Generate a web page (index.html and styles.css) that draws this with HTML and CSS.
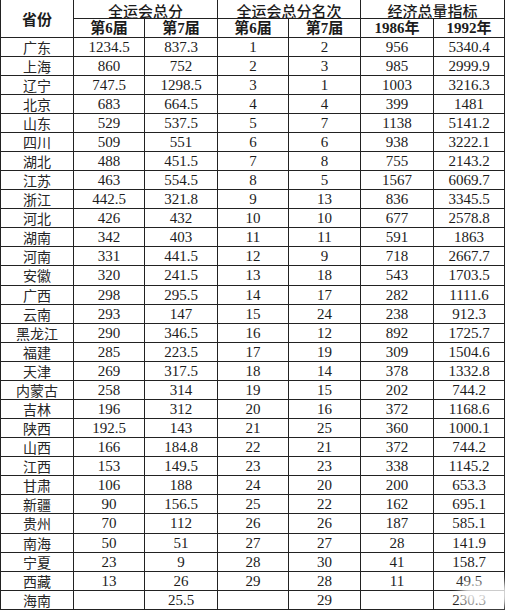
FILE: index.html
```html
<!DOCTYPE html>
<html lang="zh">
<head>
<meta charset="utf-8">
<link rel="stylesheet" href="styles.css">
</head>
<body>
<div class="wrap">
<table class="tbl">
  <colgroup>
    <col class="c1"><col class="c2"><col class="c3"><col class="c4"><col class="c5"><col class="c6"><col class="c7">
  </colgroup>
  <thead>
    <tr class="h1">
      <th rowspan="2" class="prov-h">省份</th>
      <th colspan="2">全运会总分</th>
      <th colspan="2">全运会总分名次</th>
      <th colspan="2">经济总量指标</th>
    </tr>
    <tr class="h2">
      <th>第6届</th><th>第7届</th><th>第6届</th><th>第7届</th><th>1986年</th><th>1992年</th>
    </tr>
  </thead>
  <tbody>
    <tr><td class="p">广东</td><td>1234.5</td><td>837.3</td><td>1</td><td>2</td><td>956</td><td>5340.4</td></tr>
    <tr><td class="p">上海</td><td>860</td><td>752</td><td>2</td><td>3</td><td>985</td><td>2999.9</td></tr>
    <tr><td class="p">辽宁</td><td>747.5</td><td>1298.5</td><td>3</td><td>1</td><td>1003</td><td>3216.3</td></tr>
    <tr><td class="p">北京</td><td>683</td><td>664.5</td><td>4</td><td>4</td><td>399</td><td>1481</td></tr>
    <tr><td class="p">山东</td><td>529</td><td>537.5</td><td>5</td><td>7</td><td>1138</td><td>5141.2</td></tr>
    <tr><td class="p">四川</td><td>509</td><td>551</td><td>6</td><td>6</td><td>938</td><td>3222.1</td></tr>
    <tr><td class="p">湖北</td><td>488</td><td>451.5</td><td>7</td><td>8</td><td>755</td><td>2143.2</td></tr>
    <tr><td class="p">江苏</td><td>463</td><td>554.5</td><td>8</td><td>5</td><td>1567</td><td>6069.7</td></tr>
    <tr><td class="p">浙江</td><td>442.5</td><td>321.8</td><td>9</td><td>13</td><td>836</td><td>3345.5</td></tr>
    <tr><td class="p">河北</td><td>426</td><td>432</td><td>10</td><td>10</td><td>677</td><td>2578.8</td></tr>
    <tr><td class="p">湖南</td><td>342</td><td>403</td><td>11</td><td>11</td><td>591</td><td>1863</td></tr>
    <tr><td class="p">河南</td><td>331</td><td>441.5</td><td>12</td><td>9</td><td>718</td><td>2667.7</td></tr>
    <tr><td class="p">安徽</td><td>320</td><td>241.5</td><td>13</td><td>18</td><td>543</td><td>1703.5</td></tr>
    <tr><td class="p">广西</td><td>298</td><td>295.5</td><td>14</td><td>17</td><td>282</td><td>1111.6</td></tr>
    <tr><td class="p">云南</td><td>293</td><td>147</td><td>15</td><td>24</td><td>238</td><td>912.3</td></tr>
    <tr><td class="p">黑龙江</td><td>290</td><td>346.5</td><td>16</td><td>12</td><td>892</td><td>1725.7</td></tr>
    <tr><td class="p">福建</td><td>285</td><td>223.5</td><td>17</td><td>19</td><td>309</td><td>1504.6</td></tr>
    <tr><td class="p">天津</td><td>269</td><td>317.5</td><td>18</td><td>14</td><td>378</td><td>1332.8</td></tr>
    <tr><td class="p">内蒙古</td><td>258</td><td>314</td><td>19</td><td>15</td><td>202</td><td>744.2</td></tr>
    <tr><td class="p">吉林</td><td>196</td><td>312</td><td>20</td><td>16</td><td>372</td><td>1168.6</td></tr>
    <tr><td class="p">陕西</td><td>192.5</td><td>143</td><td>21</td><td>25</td><td>360</td><td>1000.1</td></tr>
    <tr><td class="p">山西</td><td>166</td><td>184.8</td><td>22</td><td>21</td><td>372</td><td>744.2</td></tr>
    <tr><td class="p">江西</td><td>153</td><td>149.5</td><td>23</td><td>23</td><td>338</td><td>1145.2</td></tr>
    <tr><td class="p">甘肃</td><td>106</td><td>188</td><td>24</td><td>20</td><td>200</td><td>653.3</td></tr>
    <tr><td class="p">新疆</td><td>90</td><td>156.5</td><td>25</td><td>22</td><td>162</td><td>695.1</td></tr>
    <tr><td class="p">贵州</td><td>70</td><td>112</td><td>26</td><td>26</td><td>187</td><td>585.1</td></tr>
    <tr><td class="p">南海</td><td>50</td><td>51</td><td>27</td><td>27</td><td>28</td><td>141.9</td></tr>
    <tr><td class="p">宁夏</td><td>23</td><td>9</td><td>28</td><td>30</td><td>41</td><td>158.7</td></tr>
    <tr><td class="p">西藏</td><td>13</td><td>26</td><td>29</td><td>28</td><td>11</td><td>49.5</td></tr>
    <tr><td class="p">海南</td><td></td><td>25.5</td><td></td><td>29</td><td></td><td>230.3</td></tr>
  </tbody>
</table>
<div class="smudge"></div>
</div>
</body>
</html>
```
FILE: styles.css
```css
html, body {
  margin: 0;
  padding: 0;
  background: #ffffff;
}
.wrap {
  position: relative;
  width: 505px;
  height: 611px;
  overflow: hidden;
}
.tbl {
  border-collapse: collapse;
  table-layout: fixed;
  width: 504px;
  height: 610px;
  font-family: "Liberation Serif", "Noto Sans CJK SC", serif;
  color: #1c1c1c;
}
.c1 { width: 73px; }
.c2 { width: 71px; }
.c3 { width: 73px; }
.c4 { width: 71px; }
.c5 { width: 72px; }
.c6 { width: 73px; }
.c7 { width: 71px; }
.tbl tr {
  height: 18.5px;
}
.tbl th, .tbl td {
  border: 1px solid #222;
  padding: 0;
  line-height: 16px;
  text-align: center;
  vertical-align: middle;
  white-space: nowrap;
}
.tbl td {
  font-size: 15px;
  font-weight: 400;
}
.tbl td.p {
  font-family: "Noto Sans CJK SC", sans-serif;
  font-size: 14px;
  font-weight: 400;
  color: #262626;
}
.tbl th {
  font-family: "Liberation Serif", "Noto Sans CJK SC", serif;
  font-size: 15px;
  font-weight: 700;
}
.h1 th {
  border-top: 0;
  padding-top: 4px;
  line-height: 14px;
  font-weight: 500;
  font-family: "Noto Sans CJK SC", sans-serif;
  font-size: 15px;
}
.h1 th.prov-h {
  padding-top: 2px;
  font-weight: 700;
}
.smudge {
  position: absolute;
  left: 460px;
  top: 583px;
  width: 100px;
  height: 22px;
  background: rgba(255,255,255,0.8);
  filter: blur(4px);
  border-radius: 10px;
}
```
